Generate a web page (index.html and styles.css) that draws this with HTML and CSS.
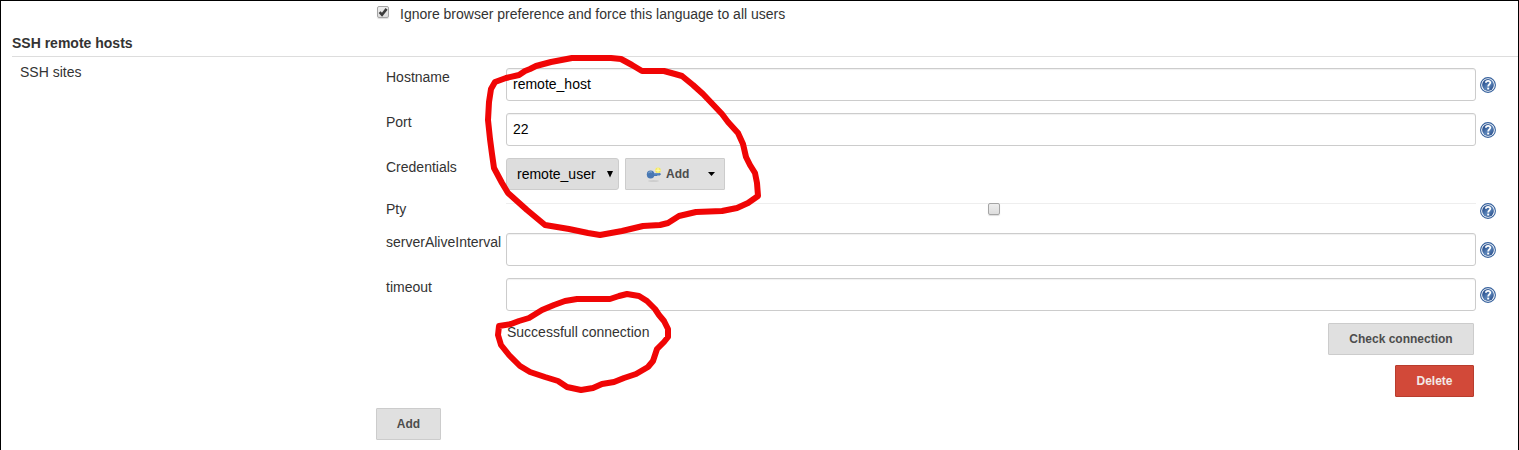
FILE: index.html
```html
<!DOCTYPE html>
<html lang="en">
<head>
<meta charset="utf-8">
<title>SSH remote hosts</title>
<link rel="stylesheet" href="styles.css">
</head>
<body>
<svg class="defs" aria-hidden="true">
  <defs>
    <linearGradient id="blue" x1="0" y1="0" x2="1" y2="1"><stop offset="0" stop-color="#143a7c"/><stop offset=".55" stop-color="#5b84b8"/><stop offset="1" stop-color="#1b4080"/></linearGradient>
    <symbol id="help" viewBox="0 0 16 16">
      <circle cx="8" cy="8" r="7.4" fill="#fff" stroke="#35609c" stroke-width="1.1"/>
      <circle cx="8" cy="8" r="5.9" fill="url(#blue)"/>
      <path d="M5.9 5.8C5.9 3.2 10.5 3.2 10.3 5.8C10.2 7.4 8.2 7.4 8.2 9.5" fill="none" stroke="#fff" stroke-width="1.8"/>
      <rect x="7.2" y="10.6" width="2" height="1.9" fill="#fff"/>
    </symbol>
  </defs>
</svg>
<main class="page">
  <label class="language"><span class="check"><svg viewBox="0 0 12 12"><path d="M2.6 6.2L5 8.7L9.6 2.9" fill="none" stroke="#3c3c3c" stroke-width="2.6"/></svg></span>Ignore browser preference and force this language to all users</label>
  <h2 class="section-title">SSH remote hosts</h2>
  <div class="section">
    <div class="section-label">SSH sites</div>
    <div class="sites">
      <div class="form">
        <div class="row"><span class="name">Hostname</span><div class="input">remote_host</div><svg class="help"><use href="#help"/></svg></div>
        <div class="row"><span class="name">Port</span><div class="input">22</div><svg class="help"><use href="#help"/></svg></div>
        <div class="row credentials"><span class="name">Credentials</span>
          <div class="controls">
            <div class="select">remote_user<svg width="6" height="7"><path d="M0 0H6L3 6.5Z" fill="#000"/></svg></div>
            <div class="button add-key">
              <svg class="key" width="16" height="16" viewBox="0 0 16 16"><ellipse cx="7.5" cy="15" rx="5.5" ry=".7" fill="#c6c6c6"/><circle cx="12" cy="4.3" r="2.8" fill="#f4e85c"/><path d="M12 1.8V6.8M9.5 4.3H14.5" stroke="#fffbb0"/><path d="M7.5 6.9H14L15 8.3L13.7 9.6H12.5L11.8 9.2L11 9.9H7.5Z" fill="#4779b7"/><ellipse cx="4.6" cy="8.4" rx="3.8" ry="4" fill="#4878b3"/><path d="M2.3 6.9Q4 5 6 6.1" fill="none" stroke="#8eb1d8"/><path d="M8 7.8H13.5" stroke="#8aadd6" stroke-width=".7"/></svg>
              Add
              <svg class="caret" width="7" height="4"><path d="M0 0H7L3.5 4Z" fill="#000"/></svg>
            </div>
          </div>
        </div>
        <div class="row pty"><span class="name">Pty</span><div class="pty-field"><span class="check"></span></div><svg class="help"><use href="#help"/></svg></div>
        <div class="row"><span class="name">serverAliveInterval</span><div class="input"></div><svg class="help"><use href="#help"/></svg></div>
        <div class="row"><span class="name">timeout</span><div class="input"></div><svg class="help"><use href="#help"/></svg></div>
      </div>
      <div class="status"><span>Successfull connection</span><div class="button">Check connection</div></div>
      <div class="remove"><div class="button danger">Delete</div></div>
      <div class="button add">Add</div>
    </div>
  </div>
  <svg class="marks" width="1519" height="450" viewBox="0 0 1519 450">
    <path d="M506 78L519 75L525 71L530 69L536 66L551 62L572 58L611 58L621 59L632 65L642 71L664 71L675 74L682 76L693 85L703 94L722 114L728 122L738 133L743 144L746 157L750 165L755 173L757 183L758 196L748 203L737 208L722 211L696 212L679 216L668 223L660 225L643 226L622 231L600 235L588 233L569 229L545 225L527 210L508 193L502 183L494 168L492 154L490 139L488 120L489 102L491 89L495 82Z"/>
    <path d="M499 326L511 324L519 321L529 318L542 310L554 305L565 301L577 299L610 299L619 296L627 294L639 296L647 301L655 309L659 315L664 321L668 329L668 337L664 342L657 349L653 361L648 367L636 374L624 378L614 382L602 384L593 388L581 390L567 387L558 381L545 377L530 372L520 366L509 355L501 345L498 335Z"/>
  </svg>
</main>
</body>
</html>
```
FILE: styles.css
```css
* { box-sizing: border-box; }
body { margin: 0; background: #fff; color: #333; font: 14px/18px "Liberation Sans", Arial, sans-serif; }
.defs { position: absolute; width: 0; height: 0; }
.page { position: relative; width: 1519px; height: 450px; overflow: hidden; border: 1px solid #000; border-bottom: 0; padding-left: 11px; }
.language { display: flex; align-items: flex-start; gap: 11px; height: 33px; padding: 4px 0 0 365px; }
.check { display: block; flex: none; width: 12px; height: 12px; border: 1px solid #a5a5a5; border-radius: 2px; background: linear-gradient(#eee, #ddd); box-shadow: 0 1px 1px #ddd; }
.check svg { display: block; width: 12px; height: 12px; margin: -1px; }
.language .check { margin-top: 1px; }
.section-title { height: 23px; margin: 0; border-bottom: 1px solid #ddd; font-size: 14px; line-height: 18px; }
.section { display: grid; grid-template-columns: 364px 1fr; padding-top: 6px; }
.section-label { padding-left: 8px; }
.sites { padding-top: 5px; }
.form { display: grid; gap: 12px; padding-left: 10px; }
.row { display: grid; grid-template-columns: 120px 970px 16px; height: 33px; }
.input { height: 33px; padding: 7px 6px; border: 1px solid #ccc; border-radius: 3px; box-shadow: inset 0 1px 1px rgba(0,0,0,.06); color: #000; line-height: 17px; }
.help { width: 16px; height: 16px; margin: 9px 0 0 4px; }
.credentials { height: 32px; }
.controls { display: flex; gap: 6px; }
.button { display: flex; align-items: center; justify-content: center; width: 65px; height: 32px; border: 1px solid #ccc; border-radius: 1px; background: #e0e0e0; color: #4d4d4d; font-size: 12px; font-weight: bold; }
.select { display: flex; align-items: center; justify-content: space-between; width: 113px; height: 32px; padding: 0 5px 0 10px; border: 1px solid #ccc; border-radius: 3px; background: #ddd; color: #000; }
.add-key { justify-content: flex-start; width: 100px; padding-left: 20px; }
.key { margin-right: 4px; }
.caret { margin-left: 19px; }
.pty { height: 31px; margin-top: -2px; }
.pty-field { display: flex; justify-content: center; height: 27px; margin-top: 3px; padding-left: 6px; border-top: 1px solid #eee; }
.pty-field .check { margin-top: -1px; }
.pty .help { margin-top: 3px; }
.pty + .row { margin-top: -10px; }
.status, .remove { display: flex; width: 1098px; }
.status { justify-content: space-between; margin-top: 12px; padding-left: 131px; }
.status .button { width: 146px; }
.remove { justify-content: flex-end; margin-top: 10px; }
.danger { width: 79px; border-color: #b83c2d; background: #d24939; color: #f3e9e7; }
.add { margin-top: 11px; }
.marks { position: absolute; top: -1px; left: -1px; }
.marks path { fill: none; stroke: #f00505; stroke-width: 6; stroke-linejoin: round; }
```
